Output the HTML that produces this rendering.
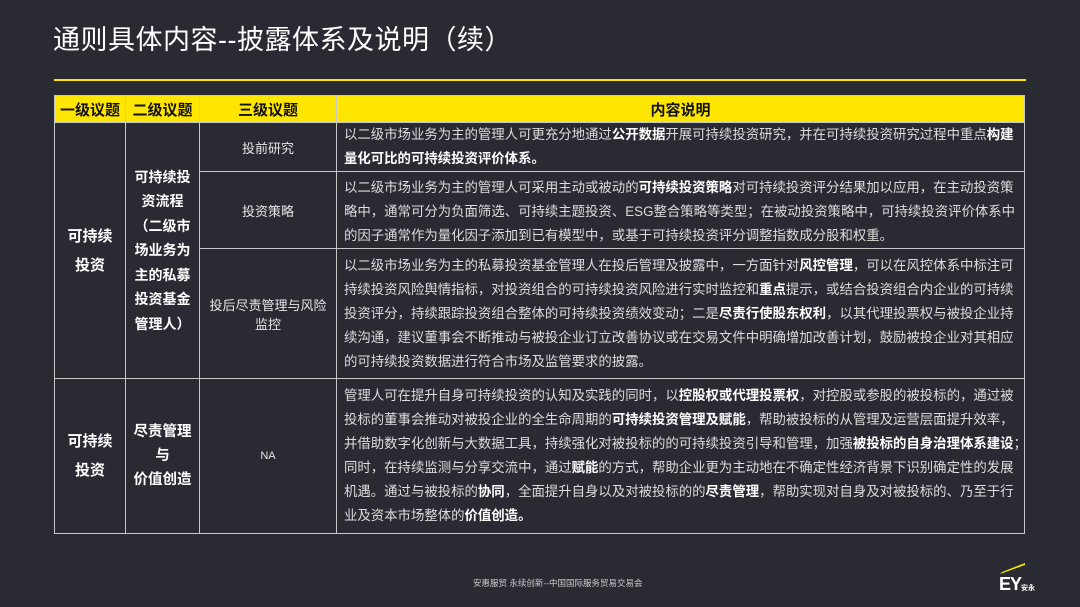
<!DOCTYPE html>
<html><head><meta charset="utf-8"><style>
body{margin:0;width:1080px;height:607px;background:#2a2a33;overflow:hidden;font-family:"Liberation Sans","Noto Sans CJK SC",sans-serif;color:#e6e6e6;position:relative}
.title{position:absolute;left:53px;top:18px;font-size:27px;color:#fff;letter-spacing:0.5px}
.hl{position:absolute;left:54px;top:79px;width:972px;height:2px;background:#ffe600}
table{position:absolute;left:54px;top:95px;border-collapse:collapse;table-layout:fixed;width:971px}
td{border:1px solid #c8c8c8;padding:0;text-align:center;vertical-align:middle;font-size:13px}
th{background:#ffe600;color:#111;font-size:15px;font-weight:bold;height:26px;border:1px solid #c8c8c8;padding:0}
.b{font-weight:bold;font-size:14px;line-height:24.5px;color:#fff}
.b2{font-weight:bold;font-size:15px;line-height:29px;color:#fff}
.c{text-align:left;padding:0 0 0 7px;line-height:24px;white-space:nowrap;color:#ddd;font-size:13.4px}
.c b{color:#fff}
.foot{position:absolute;left:473px;top:577px;font-size:8.5px;color:#ccc}
.ey{position:absolute;left:999px;top:574px;font-size:18px;font-weight:bold;color:#fff;letter-spacing:-1px}
.ey small{font-size:7px;letter-spacing:0}
</style></head><body>
<div class="title">通则具体内容--披露体系及说明（续）</div>
<div class="hl"></div>
<table>
<colgroup><col style="width:71px"><col style="width:74px"><col style="width:137px"><col></colgroup>
<tr><th>一级议题</th><th>二级议题</th><th>三级议题</th><th>内容说明</th></tr>
<tr style="height:49px"><td rowspan="3" class="b2">可持续<br>投资</td><td rowspan="3" class="b">可持续投<br>资流程<br>（二级市<br>场业务为<br>主的私募<br>投资基金<br>管理人）</td><td>投前研究</td><td class="c">以二级市场业务为主的管理人可更充分地通过<b>公开数据</b>开展可持续投资研究，并在可持续投资研究过程中重点<b>构建</b><br><b>量化可比的可持续投资评价体系。</b></td></tr>
<tr style="height:76px"><td>投资策略</td><td class="c" style="padding-top:4px">以二级市场业务为主的管理人可采用主动或被动的<b>可持续投资策略</b>对可持续投资评分结果加以应用，在主动投资策<br>略中，通常可分为负面筛选、可持续主题投资、ESG整合策略等类型；在被动投资策略中，可持续投资评价体系中<br>的因子通常作为量化因子添加到已有模型中，或基于可持续投资评分调整指数成分股和权重。</td></tr>
<tr style="height:130px"><td>投后尽责管理与风险<br>监控</td><td class="c">以二级市场业务为主的私募投资基金管理人在投后管理及披露中，一方面针对<b>风控管理</b>，可以在风控体系中标注可<br>持续投资风险舆情指标，对投资组合的可持续投资风险进行实时监控和<b>重点</b>提示，或结合投资组合内企业的可持续<br>投资评分，持续跟踪投资组合整体的可持续投资绩效变动；二是<b>尽责行使股东权利</b>，以其代理投票权与被投企业持<br>续沟通，建议董事会不断推动与被投企业订立改善协议或在交易文件中明确增加改善计划，鼓励被投企业对其相应<br>的可持续投资数据进行符合市场及监管要求的披露。</td></tr>
<tr style="height:155px"><td class="b2">可持续<br>投资</td><td class="b" style="line-height:24px;font-size:14.5px">尽责管理<br>与<br>价值创造</td><td style="font-size:11px">NA</td><td class="c">管理人可在提升自身可持续投资的认知及实践的同时，以<b>控股权或代理投票权</b>，对控股或参股的被投标的，通过被<br>投标的董事会推动对被投企业的全生命周期的<b>可持续投资管理及赋能</b>，帮助被投标的从管理及运营层面提升效率，<br>并借助数字化创新与大数据工具，持续强化对被投标的的可持续投资引导和管理，加强<b>被投标的自身治理体系建设</b>；<br>同时，在持续监测与分享交流中，通过<b>赋能</b>的方式，帮助企业更为主动地在不确定性经济背景下识别确定性的发展<br>机遇。通过与被投标的<b>协同</b>，全面提升自身以及对被投标的的<b>尽责管理</b>，帮助实现对自身及对被投标的、乃至于行<br>业及资本市场整体的<b>价值创造。</b></td></tr>
</table>
<div class="foot">安惠服贸 永续创新--中国国际服务贸易交易会</div>
<svg style="position:absolute;left:1000px;top:563px" width="26" height="12"><polygon points="0,11 25,2 25,0 2,9" fill="#ffe600"/></svg>
<div class="ey">EY<small>安永</small></div>
</body></html>
